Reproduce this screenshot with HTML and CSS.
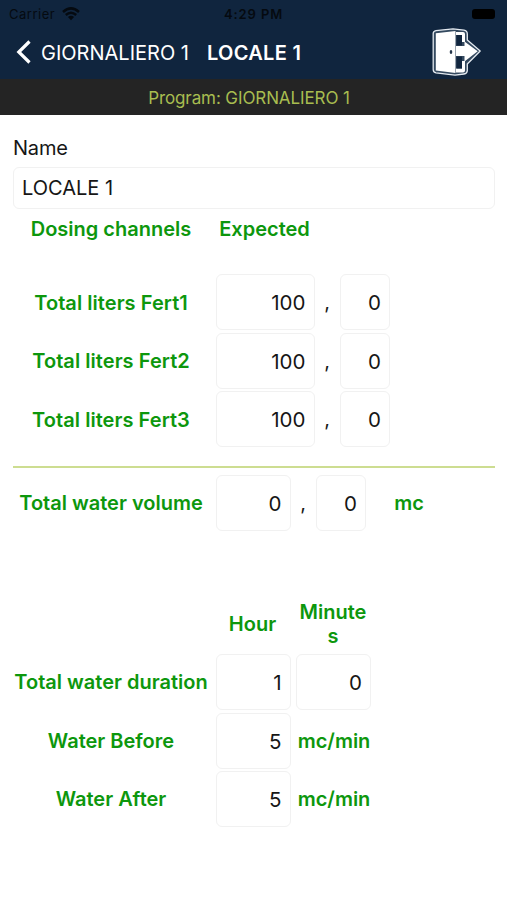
FILE: index.html
```html
<!DOCTYPE html>
<html lang="en">
<head>
<meta charset="utf-8">
<title>LOCALE 1</title>
<link rel="stylesheet" href="styles.css">
</head>
<body>
<header class="top">
  <div class="status">
    <span class="carrier">Carrier</span>
    <svg class="wifi" width="18" height="14" viewBox="0 0 18 14"><path d="M1 5Q9-2.2 17 5M3.8 8Q9 3.4 14.2 8" fill="none" stroke="#050a10" stroke-width="2.5"/><path d="M5.9 9.9Q9 7.4 12.1 9.9L9 13.2Z" fill="#050a10"/></svg>
    <span class="clock">4:29 PM</span>
    <span class="battery"></span>
  </div>
  <nav class="nav">
    <svg class="back" width="16" height="26" viewBox="0 0 16 26"><path d="M14.5 2.5L3.8 13L14.5 23.5" fill="none" stroke="#fff" stroke-width="3.2"/></svg>
    <span class="parent">GIORNALIERO 1</span>
    <h1 class="title">LOCALE 1</h1>
    <svg class="exit" width="54" height="50" viewBox="0 0 54 50">
      <path d="M4.2 6.5Q4.2 4 7 3.6L24 1.8L35 3.2Q38.3 3.8 38.3 7V13L51.2 24L38.3 37V43.5Q38.3 46.5 35 47L26 48.2L7 45.8Q4.2 45.3 4.2 42.5Z" fill="#34495f" stroke="#e4eaf0" stroke-width="1.3" stroke-linejoin="round"/>
      <path d="M27 5H34Q36 5 36 7V15H33V8H27ZM27 45.5H34Q36 45.5 36 43.5V34H33V41.5H27Z" fill="#fff"/>
      <path d="M27.5 8H33V18.5H27.5ZM27.5 29.5H33V41.5H27.5Z" fill="#10253e"/>
      <path d="M6.8 6.2L26.5 4V46L6.8 43.5Z" fill="#fff"/>
      <path d="M27 19H35.5V14.5L48.7 24.2L35.5 34.5V29H27Z" fill="#fff"/>
      <ellipse cx="22" cy="25" rx="1.3" ry="2" fill="#25364b"/>
    </svg>
  </nav>
</header>
<div class="program">Program: GIORNALIERO 1</div>
<main class="form">
  <label class="name-label">Name</label>
  <div class="box name-box">LOCALE 1</div>
  <div class="heads"><span class="label dosing">Dosing channels</span><span class="label expected">Expected</span></div>
  <section class="rows">
    <div class="row"><span class="label fert">Total liters Fert1</span><span class="box wide">100</span><span class="comma">,</span><span class="box small">0</span></div>
    <div class="row"><span class="label fert">Total liters Fert2</span><span class="box wide">100</span><span class="comma">,</span><span class="box small">0</span></div>
    <div class="row"><span class="label fert">Total liters Fert3</span><span class="box wide">100</span><span class="comma">,</span><span class="box small">0</span></div>
  </section>
  <hr class="rule">
  <div class="row"><span class="label volume">Total water volume</span><span class="box mid">0</span><span class="comma">,</span><span class="box small">0</span><span class="label mc">mc</span></div>
  <section class="rows timing">
    <div class="row time-heads"><span class="label"></span><span class="unit hour">Hour</span><span class="unit minutes">Minutes</span></div>
    <div class="row"><span class="label duration">Total water duration</span><span class="box mid">1</span><span class="box mid second">0</span></div>
    <div class="row"><span class="label before">Water Before</span><span class="box mid">5</span><span class="unit rate">mc/min</span></div>
    <div class="row"><span class="label after">Water After</span><span class="box mid">5</span><span class="unit rate">mc/min</span></div>
  </section>
</main>
</body>
</html>
```
FILE: styles.css
```css
* { box-sizing: border-box; }
body {
  margin: 0;
  height: 900px;
  overflow: hidden;
  background: #fff;
  color: #161616;
  font: 20px/24px Inter, "Liberation Sans", sans-serif;
}
.top { height: 79px; background: #10253e; }
.status {
  display: grid;
  grid-template-columns: 53px 171px 1fr 35px;
  align-items: center;
  height: 28px;
  padding-left: 9px;
  font-size: 13px;
  line-height: 28px;
  color: #050a10;
}
.carrier { letter-spacing: .5px; }
.clock { font-weight: 600; letter-spacing: .9px; margin-left: -9px; white-space: nowrap; }
.battery { width: 23px; height: 10px; border-radius: 3px; background: #000; }
.nav { display: flex; align-items: center; height: 48px; padding-left: 15px; color: #fff; }
.parent { width: 166px; margin-left: 10px; padding-top: 1px; white-space: nowrap; }
.title { width: 222px; margin: 0; padding-top: 1px; font-size: 20px; font-weight: 600; letter-spacing: .3px; white-space: nowrap; }
.program {
  height: 36px;
  padding-right: 9px;
  background: #242424;
  color: #a8bd50;
  font-size: 17px;
  letter-spacing: -.1px;
  line-height: 38px;
  text-align: center;
}
.form { padding: 21px 12px 0 13px; }
.name-label { display: block; height: 31px; letter-spacing: -.2px; }
.box {
  flex: none;
  height: 56px;
  border: 1.5px solid #f1f1f1;
  border-radius: 6px;
  padding-right: 8px;
  font-size: 20.5px;
  line-height: 55px;
  text-align: right;
}
.name-box { height: 42px; padding-left: 8px; font-size: 20px; line-height: 41px; text-align: left; }
.label { flex: none; width: 196px; text-align: center; white-space: nowrap; }
.label, .unit { color: #0d970d; font-weight: 600; }
.heads { display: flex; height: 65px; padding-top: 8px; }
.expected { width: 111px; }
.rows { display: grid; row-gap: 2.6px; }
.row { display: flex; align-items: center; height: 56px; }
.fert { padding-top: 1px; letter-spacing: .05px; }
.label + .box { margin-left: 6.5px; }
.wide { width: 99px; }
.mid { width: 75px; }
.small { width: 50px; }
.comma { width: 25.5px; text-align: center; }
.second { margin-left: 5.5px; }
.rule { height: 2px; margin: 19px 0 7px; border: 0; background: #cddd91; }
.mc { width: 86px; }
.timing { margin-top: 64px; }
.time-heads { margin-bottom: .4px; padding-top: 1px; }
.unit { width: 75px; text-align: center; }
.hour { margin-left: 6px; }
.minutes { width: 70px; margin-left: 8px; overflow-wrap: anywhere; }
.rate { margin-left: 6px; }
```
